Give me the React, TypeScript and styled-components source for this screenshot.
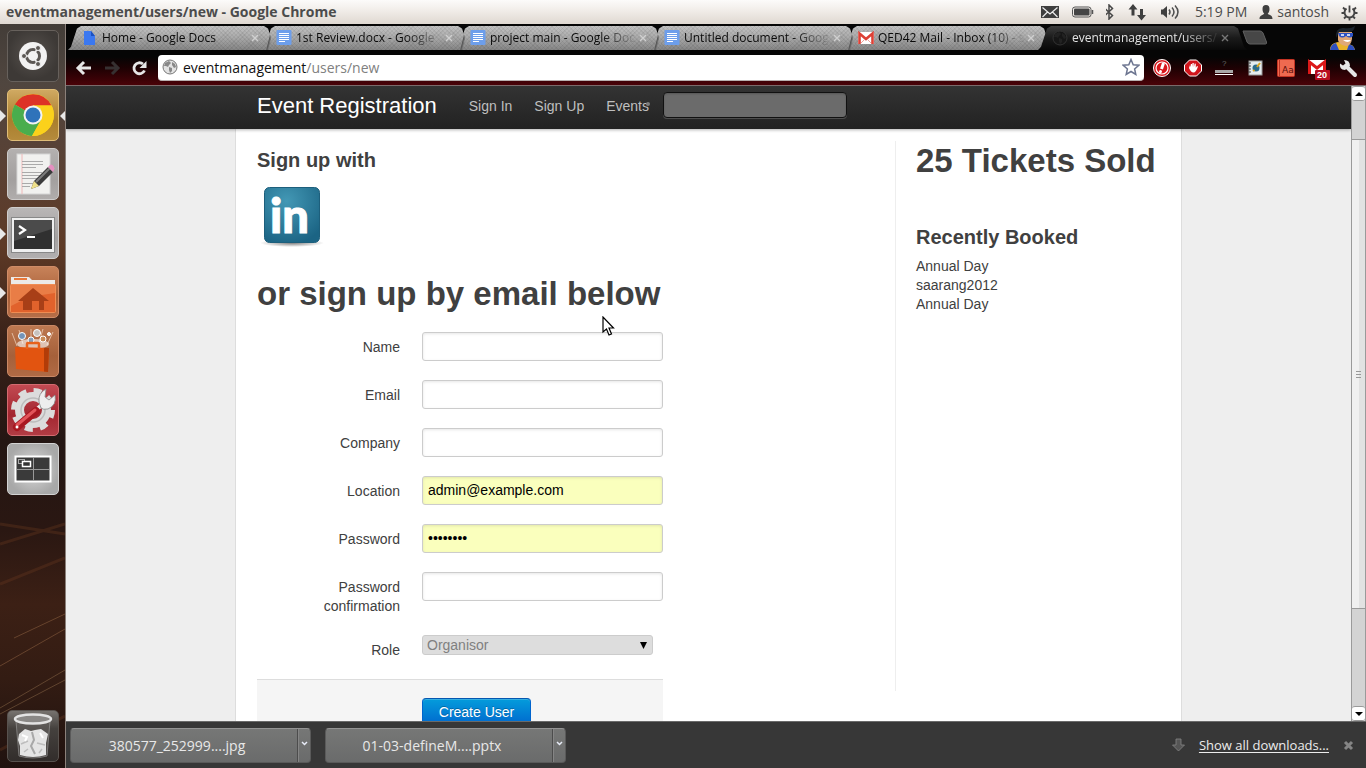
import React from "react";
import styled, { createGlobalStyle } from "styled-components";

const ui = `"Open Sans", "Noto Sans", sans-serif`;
const web = `"Liberation Sans", Arial, sans-serif`;

const GlobalStyle = createGlobalStyle`
  *, *::before, *::after { box-sizing: border-box; }
  body { margin: 0; background: #eee; font-family: ${web}; }
  h1, h2, h3, p, ul { margin: 0; padding: 0; }
  ul { list-style: none; }
  svg { display: block; flex: none; }
  button { font: inherit; padding: 0; border: 0; background: none; color: inherit; }
`;

/* ---------- desktop ---------- */

const Desktop = styled.div`
  display: flex;
  flex-direction: column;
  height: 100vh;
  overflow: hidden;
`;

const Panel = styled.header`
  flex: none;
  display: flex;
  align-items: center;
  height: 24px;
  padding: 0 8px 0 6px;
  color: #4c4c4c;
  background: linear-gradient(#fcfbfa, #f2eeea 40%, #dfd8d1);
  font-family: ${ui};
`;

const WindowTitle = styled.h1`
  flex: 1;
  font-size: 14px;
  font-weight: 700;
  line-height: 24px;
  white-space: nowrap;
`;

const Indicators = styled.div`
  display: flex;
  align-items: center;
  gap: 12px;
  font-size: 14px;
  line-height: 24px;
  white-space: nowrap;
`;

const UserMenu = styled.button`
  display: flex;
  align-items: center;
  gap: 4px;
`;

const Workspace = styled.div`
  flex: 1;
  min-height: 0;
  display: flex;
`;

const Launcher = styled.nav`
  position: relative;
  flex: none;
  display: flex;
  flex-direction: column;
  gap: 7px;
  width: 66px;
  padding: 6px 6px 6px 7px;
  overflow: hidden;
  border-right: 1px solid #8b807a;
  background: linear-gradient(#433d38 0, #50463f 8%, #5a4033 20%, #5e3a26 30%, #3a2219 42%, #241613 56%, #2a1712 68%, #3c2015 78%, #331c13 88%, #20120f);
`;

const Streaks = styled.svg`
  position: absolute;
  left: 0;
  top: 0;
`;

const Tile = styled.button<{ $bg: string; $edge: string; $last?: boolean }>`
  position: relative;
  flex: none;
  width: 52px;
  height: 52px;
  margin-top: ${(p) => (p.$last ? "auto" : "0")};
  border: 1px solid ${(p) => p.$edge};
  border-radius: 5px;
  background: ${(p) => p.$bg};
`;

const TileArt = styled.svg`
  position: absolute;
  left: -1px;
  top: -1px;
`;

const Pip = styled.span<{ $side: "left" | "right" }>`
  position: absolute;
  top: 20px;
  ${(p) => p.$side}: -8px;
  border-style: solid;
  border-color: transparent #e8e8e8;
  border-width: ${(p) => (p.$side === "left" ? "6px 0 6px 6px" : "6px 6px 6px 0")};
`;

/* ---------- browser ---------- */

const Browser = styled.main`
  flex: 1;
  min-width: 0;
  display: flex;
  flex-direction: column;
`;

const TabStrip = styled.div`
  flex: none;
  display: flex;
  align-items: flex-end;
  height: 26px;
  padding: 0 10px 0 2px;
  background: #060606;
  font-family: ${ui};
`;

const Tab = styled.div<{ $active?: boolean; $z: number }>`
  position: relative;
  z-index: ${(p) => p.$z};
  flex: 0 1 209px;
  min-width: 0;
  display: flex;
  align-items: center;
  gap: 4px;
  height: 24px;
  margin-right: -15px;
  padding: 0 17px 0 14px;
  color: ${(p) => (p.$active ? "#e4e4e4" : "#0a0a0a")};
  font-size: 12px;
  line-height: 24px;
  clip-path: polygon(0 100%, 3px 86%, 9px 10%, 13px 0, calc(100% - 13px) 0, calc(100% - 9px) 10%, calc(100% - 3px) 86%, 100% 100%);
  background: ${(p) =>
    p.$active
      ? "linear-gradient(#3c3c3c, #1a1a1a 50%, #080808)"
      : "linear-gradient(104deg, transparent calc(100% - 11px), #555 calc(100% - 10px), transparent calc(100% - 8px)), repeating-linear-gradient(45deg, rgba(0,0,0,.06) 0 1px, transparent 1px 3px), repeating-linear-gradient(-45deg, rgba(0,0,0,.06) 0 1px, transparent 1px 3px), linear-gradient(#c2c2c2, #a8a8a8 50%, #858585)"};
`;

const TabTitle = styled.span`
  flex: 1;
  min-width: 0;
  margin-right: -4px;
  overflow: hidden;
  white-space: nowrap;
  mask-image: linear-gradient(90deg, #000 calc(100% - 38px), transparent);
`;

const NewTab = styled.button`
  align-self: center;
  width: 26px;
  height: 15px;
  margin-left: 10px;
`;

const Avatar = styled.div`
  margin-left: auto;
`;

const Toolbar = styled.div`
  flex: none;
  display: flex;
  align-items: center;
  gap: 8px;
  height: 36px;
  padding: 0 8px;
  border-bottom: 1px solid #7a6a6b;
  background: linear-gradient(#050505 20%, #1c0103 50%, #4a0208);
`;

const NavButtons = styled.div`
  display: flex;
  gap: 8px;
  button { width: 20px; height: 20px; }
`;

const Omnibox = styled.div`
  flex: 1;
  min-width: 0;
  display: flex;
  align-items: center;
  gap: 5px;
  height: 26px;
  padding: 0 4px;
  border-radius: 4px;
  border-bottom: 1px solid #b8b0b0;
  background: #fff;
  color: #808080;
  font-family: ${ui};
  font-size: 14px;
  line-height: 25px;
`;

const Url = styled.span`
  flex: 1;
  white-space: nowrap;
  b { font-weight: 400; color: #111; }
`;

const Extensions = styled.div`
  display: flex;
  align-items: center;
  gap: 11px;
  button { width: 20px; height: 24px; }
`;

const Viewport = styled.div`
  flex: 1;
  min-height: 0;
  display: flex;
`;

const Page = styled.div`
  position: relative;
  flex: 1;
  min-width: 0;
  overflow: hidden;
  background: #eee;
  color: #404040;
  font-size: 14px;
  line-height: 19px;
`;

const Scrollbar = styled.div`
  flex: none;
  display: flex;
  flex-direction: column;
  width: 15px;
  border-left: 1px solid #9a9a9a;
  border-right: 1px solid #9a9a9a;
  background: #d3d3d3;
`;

const ScrollButton = styled.button`
  display: flex;
  align-items: center;
  justify-content: center;
  height: 15px;
  background: #fff;
  border: solid #9a9a9a;
  border-width: 1px 0;
  border-radius: 3px;
`;

const Trough = styled.div<{ $share: number }>`
  flex: ${(p) => p.$share} 1 0;
`;

const Thumb = styled.div`
  flex: 469 1 0;
  display: flex;
  align-items: center;
  justify-content: center;
  border: solid #9a9a9a;
  border-width: 1px 0;
  background: linear-gradient(90deg, #f0f0f0 50%, #e2e2e2 55%);
`;

/* ---------- web page ---------- */

const Navbar = styled.nav`
  position: relative;
  height: 43px;
  background: linear-gradient(#333, #222);
  box-shadow: 0 1px 3px rgba(0, 0, 0, 0.3);
`;

const NavInner = styled.div`
  display: flex;
  align-items: center;
  gap: 22px;
  max-width: 947px;
  height: 39px;
  margin: 0 auto;
  padding: 0 22px;
`;

const Brand = styled.a`
  margin-right: 10px;
  color: #fff;
  font-size: 22px;
  line-height: 24px;
  text-decoration: none;
  white-space: nowrap;
`;

const NavLink = styled.a`
  position: relative;
  color: #bfbfbf;
  line-height: 19px;
  padding: 2px 0 0;
  text-decoration: none;
  white-space: nowrap;
`;

const Caret = styled.span`
  position: absolute;
  right: -1px;
  top: 7px;
  width: 4px;
  height: 4px;
  border-radius: 2px;
  background: #7d7d7d;
`;

const Search = styled.input`
  width: 184px;
  height: 26px;
  margin: -2px 0 0 -8px;
  padding: 4px 9px;
  border: 1px solid #111;
  border-radius: 4px;
  color: #fff;
  background: #6b6b6b;
  box-shadow: 0 1px 0 #4d4d4d, inset 0 1px 2px rgba(0, 0, 0, 0.2);
`;

const Sheet = styled.div`
  display: flex;
  justify-content: space-between;
  max-width: 947px;
  min-height: 620px;
  margin: 0 auto;
  padding: 12px 21px 22px;
  border: solid #ddd;
  border-width: 0 1px;
  background: #fff;
`;

const Main = styled.section`
  flex: 0 1 406px;
`;

const Sidebar = styled.aside`
  flex: 0 0 265px;
  height: 550px;
  padding-left: 20px;
  border-left: 1px solid #eee;
`;

const Title = styled.h1`
  font-size: 33px;
  line-height: 40px;
  white-space: nowrap;
`;

const Subtitle = styled.h3`
  font-size: 20px;
  line-height: 39px;
`;

const TicketCount = styled(Title)`
  margin-bottom: 37px;
`;

const LinkedIn = styled.a`
  display: block;
  width: 70px;
  margin-bottom: 24px;
`;

const Form = styled.form`
  margin-top: 18px;
`;

const Row = styled.div`
  display: grid;
  grid-template-columns: 143px 1fr;
  column-gap: 22px;
  align-items: start;
  min-height: 25px;
  margin-bottom: 19px;
`;

const Label = styled.label`
  padding: 6px 0 0 60px;
  text-align: right;
`;

const Field = styled.input<{ $filled?: boolean }>`
  width: 100%;
  height: 29px;
  padding: 4px 5px 6px;
  border: 1px solid #ccc;
  border-radius: 3px;
  outline: 0;
  color: #000;
  background: ${(p) => (p.$filled ? "#faffbd" : "#fff")};
  box-shadow: inset 0 1px 3px rgba(0, 0, 0, 0.1);
  font: 14px ${web};
`;

const SelectWrap = styled.div`
  position: relative;
  width: 231px;
  height: 21px;
  svg { position: absolute; right: 6px; top: 7px; }
`;

const Select = styled.select`
  appearance: none;
  display: block;
  width: 100%;
  height: 20px;
  padding: 0 4px 1px;
  border: 1px solid #ccc;
  border-radius: 3px;
  color: #808080;
  background: #ddd;
  opacity: 1;
  font: 14px ${web};
`;

const Actions = styled.div`
  padding: 18px 0 18px 165px;
  border-top: 1px solid #ddd;
  background: #f5f5f5;
`;

const Submit = styled.button`
  width: 109px;
  height: 30px;
  padding-bottom: 1px;
  border: 1px solid #0064cd;
  border-top-color: #0557b0;
  border-radius: 4px;
  color: #fff;
  background: linear-gradient(#049cdb, #0064cd);
  box-shadow: inset 0 1px 0 rgba(255, 255, 255, 0.2);
  text-shadow: 0 -1px 0 rgba(0, 0, 0, 0.25);
  font-size: 14px;
`;

const Pointer = styled.svg`
  position: absolute;
  left: 536px;
  top: 230px;
`;

/* ---------- downloads ---------- */

const Downloads = styled.footer`
  flex: none;
  display: flex;
  align-items: center;
  gap: 14px;
  height: 47px;
  padding: 0 12px 0 4px;
  border-top: 1px solid #6a6a6a;
  color: #e8e8e8;
  background: #373737;
  font-family: ${ui};
  font-size: 13px;
`;

const Download = styled.div`
  display: flex;
  width: 241px;
  height: 35px;
  overflow: hidden;
  border: 1px solid #5a5a5a;
  border-top-color: #949494;
  border-radius: 4px;
  background: linear-gradient(#767776, #6a6b6b);
`;

const FileButton = styled.button`
  flex: 1;
  padding-right: 14px;
  font-size: 14px;
`;

const MenuButton = styled.button`
  display: flex;
  justify-content: center;
  width: 13px;
  padding-top: 12px;
  border-left: 1px solid #4c4c4c;
  box-shadow: inset 1px 0 0 #858585;
`;

const AllDownloads = styled.div`
  display: flex;
  align-items: center;
  gap: 14px;
  margin-left: auto;
  a { color: #ececec; text-underline-offset: 2px; white-space: nowrap; }
`;

/* ---------- icons ---------- */

const DocIcon = () => (
  <svg width="16" height="16" viewBox="0 0 16 16">
    <rect x="0.5" width="15" height="15" rx="1" fill="#6d9eeb" />
    <path d="M3 3.5h10M3 5.5h10M3 7.5h10M3 9.5h10M3 11.5h6" stroke="#fff" />
  </svg>
);

const HomeDocIcon = () => (
  <svg width="16" height="16" viewBox="0 0 16 16">
    <path d="M2 1h7l4 5v9H2z" fill="#3b78f0" />
    <path d="M9 1l4 5H9z" fill="#1b50c0" />
  </svg>
);

const GmailIcon = () => (
  <svg width="16" height="16" viewBox="0 0 16 16">
    <rect y="2" width="16" height="12" rx="1" fill="#fff" />
    <path d="M1.5 14V3.5L8 9l6.5-5.5V14" fill="none" stroke="#dd4136" strokeWidth="2.6" />
    <path d="M3 13l4-4M13 13L9 9" stroke="#eba29c" />
  </svg>
);

const GlobeIcon = ({ dark }: { dark?: boolean }) => (
  <svg width="16" height="16" viewBox="0 0 16 16">
    <circle cx="8" cy="8" r="7" fill={dark ? "#161616" : "#e2e2e2"} stroke={dark ? "#333" : "#777"} />
    <path d="M3 4l4-2 2 2-2 2-1 2-2-1-2 0zM7 8l3 1v3l-2 2-1-3zM10 3l3 2 1 3-2 1-2-3z" fill={dark ? "#222" : "#888"} />
  </svg>
);

const Cross = ({ color }: { color: string }) => (
  <svg width="10" height="10" viewBox="0 0 10 10">
    <path d="M2 2l6 6M8 2l-6 6" stroke={color} strokeWidth="1.4" />
  </svg>
);

const TABS = [
  { title: "Home - Google Docs", icon: <HomeDocIcon /> },
  { title: "1st Review.docx - Google", icon: <DocIcon /> },
  { title: "project main - Google Doc", icon: <DocIcon /> },
  { title: "Untitled document - Goog", icon: <DocIcon /> },
  { title: "QED42 Mail - Inbox (10) - s", icon: <GmailIcon /> },
  { title: "eventmanagement/users/", icon: <GlobeIcon dark />, active: true },
];

const FIELDS = [
  { id: "name", label: "Name" },
  { id: "email", label: "Email" },
  { id: "company", label: "Company" },
  { id: "location", label: "Location", value: "admin@example.com" },
  { id: "password", label: "Password", value: "password", type: "password" },
  { id: "confirmation", label: "Password confirmation", type: "password" },
];

const TopPanel = () => (
  <Panel>
    <WindowTitle>eventmanagement/users/new - Google Chrome</WindowTitle>
    <Indicators>
      <svg width="19" height="14" viewBox="0 0 19 14">
        <rect y="1" width="18" height="12" fill="#3f3f3f" />
        <path d="M1.5 2.5L9 9l7.5-6.5M1.5 12l5-5M16.5 12l-5-5" fill="none" stroke="#eee" strokeWidth="1.2" />
      </svg>
      <svg width="22" height="12" viewBox="0 0 22 12">
        <rect x="0.5" y="1" width="18.5" height="10" rx="2.5" fill="none" stroke="#555" />
        <rect x="2" y="2.5" width="15.5" height="7" rx="1" fill="#444" />
        <path d="M20.500 4v4" stroke="#555" strokeWidth="1.5" />
      </svg>
      <svg width="10" height="16" viewBox="2 0 10 16">
        <path d="M1 4.500l7.500 7L5 15V1l3.500 3.500-7.500 7" fill="none" stroke="#484848" strokeWidth="1.5" />
      </svg>
      <svg width="21" height="18" viewBox="0 0 21 18">
        <path d="M5 1l4.500 5.500H6.500v6h-3v-6H.5zM13.500 17.500L9 12h3V6h3v6h3z" fill="#3f3f3f" />
      </svg>
      <svg width="22" height="16" viewBox="2 0 22 16">
        <path d="M1 5.500h3L8 2v12l-4-3.500H1z" fill="#3f3f3f" />
        <path d="M10 5.500q2 2.500 0 5M13 3.500q4 4.500 0 9M16 1.500q6 6.500 0 13" fill="none" stroke="#4f4f4f" strokeWidth="1.5" />
      </svg>
      <span>5:19 PM</span>
      <UserMenu>
        <svg width="14" height="14" viewBox="0 0 14 14">
          <path d="M7 0c2.500 0 3.500 1.500 3.500 4S9.500 8 8.800 8.500c0 1.500 4.700 1 4.700 5.500H.5c0-4.500 4.700-4 4.700-5.500C4.500 8 3.500 6.500 3.500 4S4.500 0 7 0z" fill="#3f3f3f" />
        </svg>
        santosh
      </UserMenu>
      <svg width="17" height="17" viewBox="0 0 17 17">
        <path d="M5.500 4.500a5 5 0 1 0 6 0" fill="none" stroke="#444" strokeWidth="2" />
        <path d="M8.500 1.500v7M2 3.500l2 2M15 3.500l-2 2M.5 9h3M13.500 9h3M3 14.500l2-2M14 14.500l-2-2M8.500 13.500v3" stroke="#444" strokeWidth="1.8" />
      </svg>
    </Indicators>
  </Panel>
);

const LauncherBar = () => (
  <Launcher>
    <Streaks width="65" height="744" viewBox="0 0 65 744" fill="none">
      <path d="M0 642L65 605M14 614L65 590" stroke="#7a5238" strokeOpacity=".7" />
      <path d="M0 684L65 646M0 690L65 656" stroke="#a8815a" strokeOpacity=".4" />
      <path d="M0 560l65-26M0 520l65-20M0 500l65 10M0 726l65-34" stroke="#6b3820" strokeOpacity=".35" strokeWidth="3" />
    </Streaks>
    <Tile aria-label="Dash home" $bg="radial-gradient(circle at 50% 45%, #58534f, #3d3936 70%)" $edge="#67615c">
      <TileArt width="52" height="52">
        <circle cx="26" cy="26" r="14" fill="#f2f2f2" />
        <circle cx="26" cy="26" r="6.5" fill="none" stroke="#5c5855" strokeWidth="3" />
        <path d="M26 26L16 26M26 26l6-10M26 26l6 10" stroke="#f2f2f2" strokeWidth="1.5" />
        <g fill="#5c5855" stroke="#f2f2f2">
          <circle cx="17" cy="26" r="2.5" /><circle cx="31" cy="18" r="2.5" /><circle cx="31" cy="34" r="2.5" />
        </g>
        <circle cx="26" cy="26" r="4.5" fill="#f2f2f2" />
      </TileArt>
    </Tile>
    <Tile aria-label="Google Chrome" $bg="linear-gradient(#d0a962, #a97e2d 60%, #b58b3c)" $edge="#dfbd78">
      <Pip $side="left" />
      <Pip $side="right" />
      <TileArt width="52" height="52">
        <circle cx="26" cy="26" r="21" fill="#fbd11b" />
        <path d="M26 26L7.800 15.500A21 21 0 0 1 44.500 16.500H26z" fill="#dd3226" />
        <path d="M7.800 15.500A21 21 0 0 0 25 47l9-16-8-5z" fill="#4aad4d" />
        <path d="M26 26l8 5-9 16a21 21 0 0 0 19.500-30.500H26z" fill="#fbd11b" />
        <circle cx="26" cy="26" r="9.5" fill="#f3f3f3" />
        <circle cx="26" cy="26" r="7.5" fill="#2f73ba" />
      </TileArt>
    </Tile>
    <Tile aria-label="Text editor" $bg="linear-gradient(#b4b1b0, #a29f9e 60%, #b0adac)" $edge="#cdcbca">
      <TileArt width="52" height="52">
        <rect x="10" y="6" width="33" height="40" fill="#f1f1ef" stroke="#d5d5d5" />
        <path d="M15 6v40" stroke="#f0b8b8" />
        <path d="M15 13.500h21M15 16.500h21M15 19.500h14M15 24.500h20M15 27.500h21M15 30.500h17M15 35.500h12M15 38.500h8" stroke="#aaa" />
        <path d="M24 41l3-8L41 19l5 5-14 14z" fill="#3b3b3b" />
        <path d="M29 34l14-14" stroke="#7c7c7c" strokeWidth="2" />
        <path d="M24 41l3-8 5 5z" fill="#eee08a" />
        <path d="M41 19l2.500-2.500q3 0 4 4L46 24z" fill="#e58fc0" />
      </TileArt>
    </Tile>
    <Tile aria-label="Terminal" $bg="linear-gradient(#b9b6b6, #a4a1a1 60%, #b2afaf)" $edge="#d0cecd">
      <Pip $side="left" />
      <TileArt width="52" height="52">
        <rect x="4.5" y="10.5" width="43" height="35" fill="#efefef" stroke="#888" />
        <rect x="7" y="13" width="38" height="29" fill="#303030" />
        <path d="M7 13h38v9L7 34z" fill="#4b4b4b" />
        <path d="M12 19l6 4-6 4M20 30h8" fill="none" stroke="#fff" strokeWidth="2.2" />
      </TileArt>
    </Tile>
    <Tile aria-label="Home folder" $bg="linear-gradient(#c78259, #a85f38 60%, #b66e48)" $edge="#cf8c67">
      <Pip $side="left" />
      <TileArt width="52" height="52">
        <path d="M4 17v-6h18l3 3h23v6H4z" fill="#eceae8" />
        <path d="M7 13h13" stroke="#e9793a" strokeWidth="2" />
        <rect x="3.5" y="18.5" width="45" height="28" rx="1" fill="#e1622c" stroke="#f08c52" />
        <path d="M4 19h44v8Q20 30 4 40z" fill="#ee9058" opacity=".6" />
        <path d="M26 22L11 35h5v9h9v-9h7v9h5v-9h5z" fill="#a83f17" />
      </TileArt>
    </Tile>
    <Tile aria-label="Software center" $bg="linear-gradient(#bd7850, #a5603a 60%, #b06a45)" $edge="#c98865">
      <TileArt width="52" height="52">
        <path d="M10 21L5 8M16 19L12 5M24 18V4M32 18l4-14M40 20l6-13" stroke="#f4d9c4" opacity=".7" />
        <ellipse cx="26" cy="19" rx="16" ry="5" fill="#fff" opacity=".6" />
        <g stroke="#fff">
          <circle cx="15" cy="11" r="3.5" fill="#7394b8" /><circle cx="30" cy="8" r="3.5" fill="#c7c3bf" />
          <circle cx="24" cy="15" r="3" fill="#8a9fb5" /><circle cx="36" cy="14" r="3" fill="#c98a55" />
          <circle cx="42" cy="9" r="1.5" fill="#eee" />
        </g>
        <path d="M8 22l34 1-1 24-32-3z" fill="#e25410" />
        <path d="M42 23l-5 0v23.500l4 .5z" fill="#b23c08" />
        <path d="M20 24v-5q0-1 1-1h10q1 0 1 1v5" fill="none" stroke="#e8611a" strokeWidth="2.5" />
      </TileArt>
    </Tile>
    <Tile aria-label="System settings" $bg="linear-gradient(#c24a52, #a32630 60%, #b23c44)" $edge="#d36b70">
      <TileArt width="52" height="52">
        <circle cx="26" cy="26" r="19.5" fill="none" stroke="#dcdcdc" strokeWidth="5" strokeDasharray="8 7.315" />
        <circle cx="26" cy="26" r="13.500" fill="none" stroke="#dcdcdc" strokeWidth="9" />
        <circle cx="26" cy="26" r="12" fill="none" stroke="#bcbcbc" strokeWidth="1.5" />
        <path d="M38 18L10 43" stroke="#eee" strokeWidth="4" />
        <path d="M32 18q-1-9 7-13l-1 8 4 3 6-5q2 10-7 14-5 1-7-1z" fill="#eee" stroke="#888" strokeWidth=".8" />
        <path d="M29 27L10 43" stroke="#a81720" strokeWidth="8" strokeLinecap="round" />
        <path d="M28 26L10 41" stroke="#e2545a" strokeWidth="3" strokeLinecap="round" />
        <circle cx="10" cy="43" r="1.5" fill="#fff" />
      </TileArt>
    </Tile>
    <Tile aria-label="Workspace switcher" $bg="radial-gradient(circle at 50% 50%, #dcdcdc, #a8a8a8 75%)" $edge="#d3d3d3">
      <TileArt width="52" height="52">
        <rect x="8.5" y="13.5" width="35" height="25" fill="#3a3a3a" stroke="#fff" strokeWidth="2" />
        <path d="M26.500 15v22M10 26.500h32" stroke="#999" />
        <rect x="11.5" y="16.5" width="6" height="4" fill="none" stroke="#aaa" />
        <rect x="15.5" y="18.5" width="8" height="5" fill="#333" stroke="#fff" strokeWidth="1.5" />
      </TileArt>
    </Tile>
    <Tile aria-label="Trash" $bg="linear-gradient(#77736f, #45413e 35%, #322d2b)" $edge="#58524e" $last>
      <TileArt width="52" height="52">
        <path d="M9 11l3 35q14 4 28 0l3-35z" fill="#6b6866" opacity=".5" stroke="#bbb" />
        <path d="M12 24L18 19L24 21L28 20L34 19L41 24L39 33L39 45Q26 49 13 45L13 36L11 30Z" fill="#e4e4e4" />
        <path d="M25 22l2 8-3 6 4 8" fill="none" stroke="#a8a8a8" strokeWidth="2" />
        <path d="M14 34l7-3M30 33l8 2M17 42l4-3M32 43l3-4" stroke="#bdbdbd" strokeWidth="1.5" />
        <path d="M15 25l5 2-2 4M33 23l3 5" fill="none" stroke="#fff" strokeWidth="2" />
        <ellipse cx="26" cy="9" rx="18" ry="4.5" fill="#8a8886" stroke="#e3e3e3" strokeWidth="2.5" />
      </TileArt>
    </Tile>
  </Launcher>
);

const ToolbarRow = () => (
  <Toolbar>
    <NavButtons>
      <button aria-label="Back">
        <svg width="20" height="20" viewBox="0 0 20 20"><path d="M17 10H5M10 4l-6 6 6 6" fill="none" stroke="#e6e6e6" strokeWidth="3" /></svg>
      </button>
      <button aria-label="Forward">
        <svg width="20" height="20" viewBox="0 0 20 20"><path d="M3 10h12M10 4l6 6-6 6" fill="none" stroke="#363031" strokeWidth="3" /></svg>
      </button>
      <button aria-label="Reload">
        <svg width="20" height="20" viewBox="0 0 20 20">
          <path d="M14.500 12.500A5.500 5.500 0 1 1 13 6" fill="none" stroke="#e6e6e6" strokeWidth="2.8" />
          <path d="M16.500 3v7h-7z" fill="#e6e6e6" />
        </svg>
      </button>
    </NavButtons>
    <Omnibox>
      <GlobeIcon />
      <Url><b>eventmanagement</b>/users/new</Url>
      <svg width="18" height="18" viewBox="0 0 18 18">
        <path d="M9 1.500l2.200 5.200 5.600.5-4.200 3.700 1.200 5.500L9 13.500l-4.800 2.900 1.200-5.500L1.200 7.200l5.600-.5z" fill="#fff" stroke="#6c7590" strokeWidth="1.500" />
      </svg>
    </Omnibox>
    <Extensions>
      <button aria-label="Alert">
        <svg width="20" height="24"><circle cx="10" cy="12" r="8.5" fill="#d8161b" stroke="#fff" /><circle cx="10" cy="12" r="6" fill="none" stroke="#fff" strokeWidth="1.2" /><path d="M11.500 7l-2 6" stroke="#fff" strokeWidth="3" /><circle cx="8.500" cy="15.500" r="1.5" fill="#fff" /></svg>
      </button>
      <button aria-label="Blocker">
        <svg width="20" height="24">
          <path d="M6.500 4h7l5 5v6l-5 5h-7l-5-5V9z" fill="#d1141b" stroke="#fff" />
          <path d="M6 12l1-3 .8 2V8h1.200v3l.5-4h1.200l.2 4 .8-3.500 1.100.3v4l1.200-1.800 1 .5Q13 16.500 10.500 16.500T6 12z" fill="#fff" />
        </svg>
      </button>
      <button aria-label="Page tool">
        <svg width="20" height="24"><text x="8" y="10" fill="#666" fontFamily="Liberation Sans" fontSize="8">?</text><path d="M1 14h18v3H1z" fill="#a8a8a8" /><path d="M1 18.500h18" stroke="#fff" /></svg>
      </button>
      <button aria-label="Notebook">
        <svg width="20" height="24">
          <rect x="4" y="5" width="13" height="14" fill="#e5ecef" stroke="#999" />
          <circle cx="11" cy="12" r="3.500" fill="#2c6c8c" /><path d="M8 15l1.500-1M12 11l3-4" stroke="#dca71e" strokeWidth="2" />
          <path d="M3 7h3M3 10h3M3 13h3M3 16h3" stroke="#444" />
        </svg>
      </button>
      <button aria-label="Dictionary">
        <svg width="20" height="24"><rect x="1.5" y="3.5" width="17" height="17" rx="1" fill="#ee6a50" stroke="#c43323" /><path d="M3.500 4v16" stroke="#b93325" /><text x="6" y="17" fill="#5b0f0b" fontFamily="DejaVu Sans" fontSize="9">Aa</text></svg>
      </button>
      <button aria-label="Mail">
        <svg width="24" height="24">
          <rect x="1" y="4" width="18" height="14" fill="#fff" />
          <path d="M2.500 18V6l7.500 6 7.500-6v12" fill="none" stroke="#dc1818" strokeWidth="3" />
          <rect x="8" y="14" width="15" height="10" rx="1" fill="#b80d20" />
          <text x="10" y="22" fill="#fff" fontFamily="Liberation Sans" fontSize="9" fontWeight="700">20</text>
        </svg>
      </button>
      <button aria-label="Menu">
        <svg width="20" height="24">
          <path d="M9 11l8 8" stroke="#e6e6e6" strokeWidth="4" strokeLinecap="round" />
          <path d="M6 4l1.500 3.500L5 9.500 2 7.500q-1 6 5 6.500l5-4q0-6-6-6z" fill="#e6e6e6" />
        </svg>
      </button>
    </Extensions>
  </Toolbar>
);

export default function App() {
  return (
    <Desktop>
      <GlobalStyle />
      <TopPanel />
      <Workspace>
        <LauncherBar />
        <Browser>
          <TabStrip>
            {TABS.map((t, i) => (
              <Tab key={t.title} $active={t.active} $z={t.active ? 20 : 10 - i}>
                {t.icon}
                <TabTitle>{t.title}</TabTitle>
                <Cross color={t.active ? "#777" : "#d0d0d0"} />
              </Tab>
            ))}
            <NewTab aria-label="New tab">
              <svg width="26" height="15" viewBox="0 0 26 15">
                <path d="M1 1h17q2 0 3 2l3.500 9q.5 2-1 2H8q-2 0-3-2z" fill="#474747" stroke="#606060" />
              </svg>
            </NewTab>
            <Avatar>
              <svg width="26" height="24" viewBox="0 0 26 24">
                <path d="M0 24q0-7 8-8l9 2q7 0 8 6z" fill="#e9b32c" />
                <path d="M0 24q1-6 6-7l3 7zM17 24l2-6 4 2 2 4z" fill="#2c4fc0" />
                <path d="M8 6h14v7q-1 7-6 7-7-1-8-6z" fill="#e0a878" />
                <path d="M6 12Q5 1 14 2q7 1 11-2-1 6-6 6H9z" fill="#1b232b" />
                <path d="M8 7h15v3q-3 3-7 0-4 3-7 0z" fill="#2c52c4" />
                <path d="M11 9h3M17 9h3" stroke="#fff" strokeWidth="1.500" />
                <path d="M13 14h8q-3 4-8 0z" fill="#fff" />
              </svg>
            </Avatar>
          </TabStrip>
          <ToolbarRow />
          <Viewport>
            <Page>
              <Navbar>
                <NavInner>
                  <Brand href="#">Event Registration</Brand>
                  <NavLink href="#">Sign In</NavLink>
                  <NavLink href="#">Sign Up</NavLink>
                  <NavLink href="#">Events<Caret /></NavLink>
                  <Search type="text" aria-label="Search" />
                </NavInner>
              </Navbar>
              <Sheet>
                <Main>
                  <Subtitle>Sign up with</Subtitle>
                  <LinkedIn href="#" aria-label="LinkedIn">
                    <svg width="70" height="70" viewBox="0 0 70 70">
                      <defs>
                        <radialGradient id="li" cx=".4" cy=".25" r=".8">
                          <stop offset="0" stopColor="#4398b5" /><stop offset="1" stopColor="#1b6484" />
                        </radialGradient>
                        <radialGradient id="sh"><stop offset="0" stopColor="#000" stopOpacity=".5" /><stop offset="1" stopColor="#000" stopOpacity="0" /></radialGradient>
                      </defs>
                      <ellipse cx="35" cy="63" rx="32" ry="4" fill="url(#sh)" />
                      <rect x="7.5" y="7.5" width="55" height="55" rx="5" fill="url(#li)" stroke="#1d5f7c" />
                      <text x="13" y="53" fill="#fff" stroke="#fff" fontFamily="Lato" fontWeight="900" fontSize="47">in</text>
                    </svg>
                  </LinkedIn>
                  <Title>or sign up by email below</Title>
                  <Form onSubmit={(e) => e.preventDefault()}>
                    {FIELDS.map((f) => (
                      <Row key={f.id}>
                        <Label htmlFor={f.id}>{f.label}</Label>
                        <Field id={f.id} type={f.type ?? "text"} defaultValue={f.value} $filled={!!f.value} />
                      </Row>
                    ))}
                    <Row>
                      <Label htmlFor="role">Role</Label>
                      <SelectWrap>
                        <Select id="role" disabled defaultValue="Organisor"><option>Organisor</option></Select>
                        <svg width="7" height="7"><path d="M0 0h7L3.500 7z" fill="#000" /></svg>
                      </SelectWrap>
                    </Row>
                    <Actions><Submit type="submit">Create User</Submit></Actions>
                  </Form>
                </Main>
                <Sidebar>
                  <TicketCount>25 Tickets Sold</TicketCount>
                  <Subtitle>Recently Booked</Subtitle>
                  <ul>
                    <li>Annual Day</li>
                    <li>saarang2012</li>
                    <li>Annual Day</li>
                  </ul>
                </Sidebar>
              </Sheet>
              <Pointer width="14" height="20" viewBox="0 0 14 20">
                <path d="M1 1v15l3.500-3 2.500 6 2.500-1-2.500-6h4.500z" fill="#fff" stroke="#000" strokeWidth="1.200" />
              </Pointer>
            </Page>
            <Scrollbar>
              <ScrollButton aria-label="Scroll up"><svg width="8" height="4"><path d="M0 4l4-4 4 4z" /></svg></ScrollButton>
              <Trough $share={38} />
              <Thumb><svg width="5" height="7"><path d="M0 .5h5M0 3.500h5M0 6.500h5" stroke="#999" /></svg></Thumb>
              <Trough $share={97} />
              <ScrollButton aria-label="Scroll down"><svg width="8" height="4"><path d="M0 0l4 4 4-4z" /></svg></ScrollButton>
            </Scrollbar>
          </Viewport>
          <Downloads>
            {["380577_252999....jpg", "01-03-defineM....pptx"].map((name) => (
              <Download key={name}>
                <FileButton>{name}</FileButton>
                <MenuButton aria-label={`Options for ${name}`}>
                  <svg width="7" height="5"><path d="M1 1l2.500 2.500L6 1" fill="none" stroke="#e8ecf8" strokeWidth="1.500" /></svg>
                </MenuButton>
              </Download>
            ))}
            <AllDownloads>
              <svg width="13" height="14" viewBox="0 0 13 14"><path d="M4 1h5v6h3.500l-6 6-6-6H4z" fill="#555" stroke="#858585" strokeWidth=".8" /></svg>
              <a href="#">Show all downloads...</a>
              <button aria-label="Close downloads">
                <svg width="11" height="11" viewBox="0 0 11 11"><path d="M2 2l7 7M9 2L2 9" stroke="#858585" strokeWidth="3" /></svg>
              </button>
            </AllDownloads>
          </Downloads>
        </Browser>
      </Workspace>
    </Desktop>
  );
}
